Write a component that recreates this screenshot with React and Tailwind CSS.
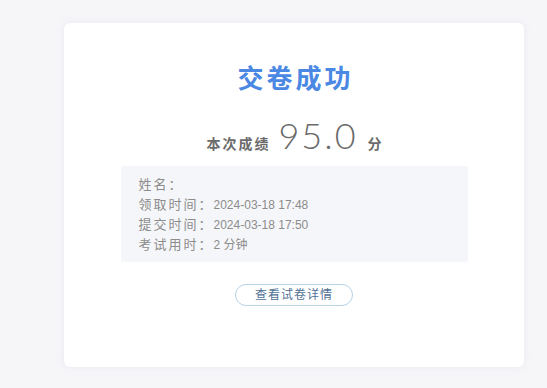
export default function App() {
  const rows = [
    { label: '姓名：', value: '' },
    { label: '领取时间：', value: '2024-03-18 17:48' },
    { label: '提交时间：', value: '2024-03-18 17:50' },
    { label: '考试用时：', value: '2 分钟' },
  ]

  return (
    <div
      className="min-h-[388px] w-full bg-[#f6f6f9] pt-[23px] pl-[64px]"
      style={{ fontFamily: "'Liberation Sans', 'Noto Sans CJK SC', sans-serif" }}
    >
      <div className="w-[460px] h-[344px] bg-white rounded-[6px] shadow-[0_0_6px_rgba(200,200,220,0.25)] flex flex-col items-center pt-[40px]">
        {/* Title */}
        <div className="text-[26px] leading-[32px] font-bold tracking-[3px] text-[#4a88e4] pl-[3px]">
          交卷成功
        </div>

        {/* Score */}
        <div className="mt-[22px] flex items-baseline h-[34px] leading-none">
          <span className="text-[14px] font-bold tracking-[2px] text-[#6b6b6b]">本次成绩</span>
          <span
            className="ml-[8px] text-[36px] font-light tracking-[2px] text-[#6a6a6a]"
            style={{ fontFamily: "Lato, 'Open Sans', sans-serif" }}
          >
            95.0
          </span>
          <span className="ml-[10px] text-[14px] font-bold text-[#6b6b6b]">分</span>
        </div>

        {/* Info */}
        <div className="mt-[15px] w-[347px] h-[96px] bg-[#f5f6f9] rounded-[2px] pl-[18px] pt-[9px]">
          {rows.map(r => (
            <div key={r.label} className="flex items-center h-[20px] text-[#8c8c8c]">
              <span className="text-[13px] tracking-[2px]">{r.label}</span>
              <span className="text-[12px]">{r.value}</span>
            </div>
          ))}
        </div>

        {/* Button */}
        <button className="mt-[22px] w-[118px] h-[22px] rounded-full border border-[#b5d2e6] bg-white text-[12px] tracking-[1px] text-[#4f7094] flex items-center justify-center">
          查看试卷详情
        </button>
      </div>
    </div>
  )
}
